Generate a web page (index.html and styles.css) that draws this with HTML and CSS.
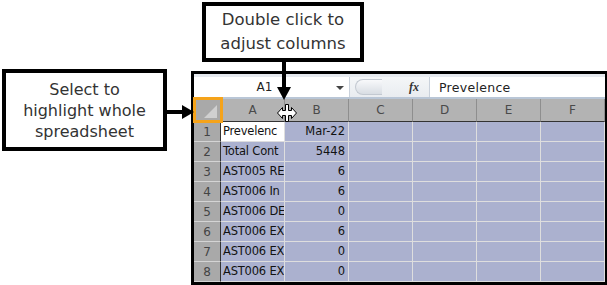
FILE: index.html
```html
<!DOCTYPE html>
<html lang="en">
<head>
    <meta charset="UTF-8">
    <meta name="viewport" content="width=device-width, initial-scale=1.0">
    <title>Select whole spreadsheet</title>
    <link rel="stylesheet" href="styles.css">
</head>
<body>
    <div class="canvas">
        <div class="callout callout-left">Select to<br>highlight whole<br>spreadsheet</div>
        <div class="callout callout-top">Double click to<br>adjust columns</div>

        <svg class="arrow arrow-left" width="30" height="16" viewBox="0 0 30 16">
            <rect x="0" y="6" width="19" height="4" fill="#000"/>
            <polygon points="17,1 29,8 17,15" fill="#000"/>
        </svg>
        <svg class="arrow arrow-down" width="16" height="40" viewBox="0 0 16 40">
            <rect x="6" y="0" width="4" height="28" fill="#000"/>
            <polygon points="1,26 15,26 8,39" fill="#000"/>
        </svg>

        <div class="sheet">
            <div class="formula-bar">
                <div class="name-box">
                    <span class="ref">A1</span>
                    <span class="caret"></span>
                </div>
                <div class="pill"></div>
                <div class="fx">fx</div>
                <div class="formula">Prevelence</div>
            </div>

            <div class="grid">
                <div class="corner"><span class="tri"></span></div>
                <div class="col-head">A</div>
                <div class="col-head">B</div>
                <div class="col-head">C</div>
                <div class="col-head">D</div>
                <div class="col-head">E</div>
                <div class="col-head">F</div>

                <div class="row-head">1</div>
                <div class="cell active">Prevelenc</div>
                <div class="cell num">Mar-22</div>
                <div class="cell"></div><div class="cell"></div><div class="cell"></div><div class="cell"></div>

                <div class="row-head">2</div>
                <div class="cell">Total Cont</div>
                <div class="cell num">5448</div>
                <div class="cell"></div><div class="cell"></div><div class="cell"></div><div class="cell"></div>

                <div class="row-head">3</div>
                <div class="cell">AST005 RE</div>
                <div class="cell num">6</div>
                <div class="cell"></div><div class="cell"></div><div class="cell"></div><div class="cell"></div>

                <div class="row-head">4</div>
                <div class="cell">AST006 In</div>
                <div class="cell num">6</div>
                <div class="cell"></div><div class="cell"></div><div class="cell"></div><div class="cell"></div>

                <div class="row-head">5</div>
                <div class="cell">AST006 DE</div>
                <div class="cell num">0</div>
                <div class="cell"></div><div class="cell"></div><div class="cell"></div><div class="cell"></div>

                <div class="row-head">6</div>
                <div class="cell">AST006 EX</div>
                <div class="cell num">6</div>
                <div class="cell"></div><div class="cell"></div><div class="cell"></div><div class="cell"></div>

                <div class="row-head">7</div>
                <div class="cell">AST006 EX</div>
                <div class="cell num">0</div>
                <div class="cell"></div><div class="cell"></div><div class="cell"></div><div class="cell"></div>

                <div class="row-head">8</div>
                <div class="cell">AST006 EX</div>
                <div class="cell num">0</div>
                <div class="cell"></div><div class="cell"></div><div class="cell"></div><div class="cell"></div>
            </div>

            <!-- column resize cursor -->
            <svg class="cursor" width="22" height="18" viewBox="0 0 22 18">
                <path d="M9.5 0.5h3v6h3v-3l5 5.5-5 5.5v-3h-3v6h-3v-6h-3v3l-5-5.5 5-5.5v3h3z" fill="#fff" stroke="#000" stroke-width="1"/>
            </svg>
        </div>
    </div>
</body>
</html>
```

FILE: styles.css
```css
html, body {
    margin: 0;
    padding: 0;
    background: white;
}

body {
    width: 607px;
    height: 285px;
    overflow: hidden;
}

.canvas {
    position: relative;
    width: 607px;
    height: 285px;
    padding: 71px 0 0 191px;
    box-sizing: border-box;
}

.callout {
    position: absolute;
    background: white;
    border: 4px solid #000;
    box-sizing: border-box;
    display: flex;
    align-items: center;
    justify-content: center;
    text-align: center;
    font-family: 'DejaVu Sans', sans-serif;
    color: #333;
    z-index: 3;
}

.callout-left {
    left: 2px;
    top: 69px;
    width: 165px;
    height: 82px;
    font-size: 16px;
    line-height: 21px;
}

.callout-top {
    left: 202px;
    top: 2px;
    width: 162px;
    height: 60px;
    font-size: 16.5px;
    line-height: 24px;
}

.arrow {
    position: absolute;
    z-index: 4;
}

.arrow-left {
    left: 165px;
    top: 104px;
}

.arrow-down {
    left: 276px;
    top: 61px;
}

.sheet {
    position: relative;
    width: 417px;
    height: 214px;
    border: 3px solid #000;
    box-sizing: border-box;
    background: #fff;
    font-family: 'DejaVu Sans', Verdana, sans-serif;
    font-size: 11.5px;
}

.formula-bar {
    height: 25px;
    display: flex;
    align-items: stretch;
    box-sizing: border-box;
    border-top: 3px solid #e6eaef;
    border-bottom: 2px solid #b9c6d6;
    background: linear-gradient(#f4f6f8, #e9ecf0);
}

.name-box {
    width: 155px;
    background: #fff;
    border-right: 1px solid #c9d1db;
    display: flex;
    align-items: center;
    position: relative;
}

.ref {
    flex: 1;
    text-align: center;
    color: #222;
    font-size: 12px;
    padding-right: 14px;
}

.caret {
    position: absolute;
    right: 5px;
    top: 9px;
    border-left: 4px solid transparent;
    border-right: 4px solid transparent;
    border-top: 4px solid #444;
}

.pill {
    width: 26px;
    margin: 2px 0 2px 5px;
    border-radius: 10px 0 0 10px;
    background: linear-gradient(#f8f9fb, #d8dde3);
    border: 1px solid #c3c9d1;
    border-right: none;
}

.fx {
    margin-left: auto;
    width: 18px;
    padding-right: 6px;
    display: flex;
    align-items: center;
    justify-content: center;
    font-family: 'Liberation Serif', serif;
    font-style: italic;
    font-weight: bold;
    font-size: 12px;
    color: #333;
    border-right: 1px solid #c9d1db;
}

.formula {
    width: 166px;
    background: #fff;
    padding-left: 9px;
    display: flex;
    align-items: center;
    color: #222;
    font-size: 12.5px;
    letter-spacing: 0.3px;
}

.grid {
    display: grid;
    grid-template-columns: 27px repeat(6, 64px);
    grid-template-rows: 23px repeat(8, 20px);
}

.grid > div {
    box-sizing: border-box;
    overflow: hidden;
    white-space: nowrap;
}

.grid > .corner {
    background: #a9a9a9;
    border-right: 1px solid #333;
    border-bottom: 1px solid #333;
    position: relative;
    overflow: visible;
}

.corner::after {
    content: '';
    position: absolute;
    left: -1px;
    top: -2px;
    width: 30px;
    height: 26px;
    border: 3px solid #f5a31a;
    box-sizing: border-box;
    z-index: 2;
}

.tri {
    position: absolute;
    right: 3px;
    bottom: 3px;
    border-left: 13px solid transparent;
    border-bottom: 13px solid #d0d0d0;
}

.col-head {
    background: #b3b3b3;
    color: #4a4a4a;
    font-size: 12px;
    text-align: center;
    line-height: 22px;
    border-right: 1px solid #8e8e8e;
    border-bottom: 1px solid #333;
}

.row-head {
    background: #a9a9a9;
    color: #444;
    font-size: 12px;
    text-align: center;
    line-height: 20px;
    border-right: 1px solid #333;
    border-bottom: 1px solid #d4d4d4;
}

.cell {
    background: #abb1cf;
    color: #111;
    line-height: 19px;
    padding: 0 1px 0 2px;
    letter-spacing: -0.2px;
    border-right: 1px solid #dedede;
    border-bottom: 1px solid #dedede;
}

.cell.active {
    background: #fff;
}

.cell.num {
    text-align: right;
    padding-right: 3px;
    letter-spacing: 0;
}

.cursor {
    position: absolute;
    left: 82px;
    top: 30px;
    z-index: 3;
}
```
